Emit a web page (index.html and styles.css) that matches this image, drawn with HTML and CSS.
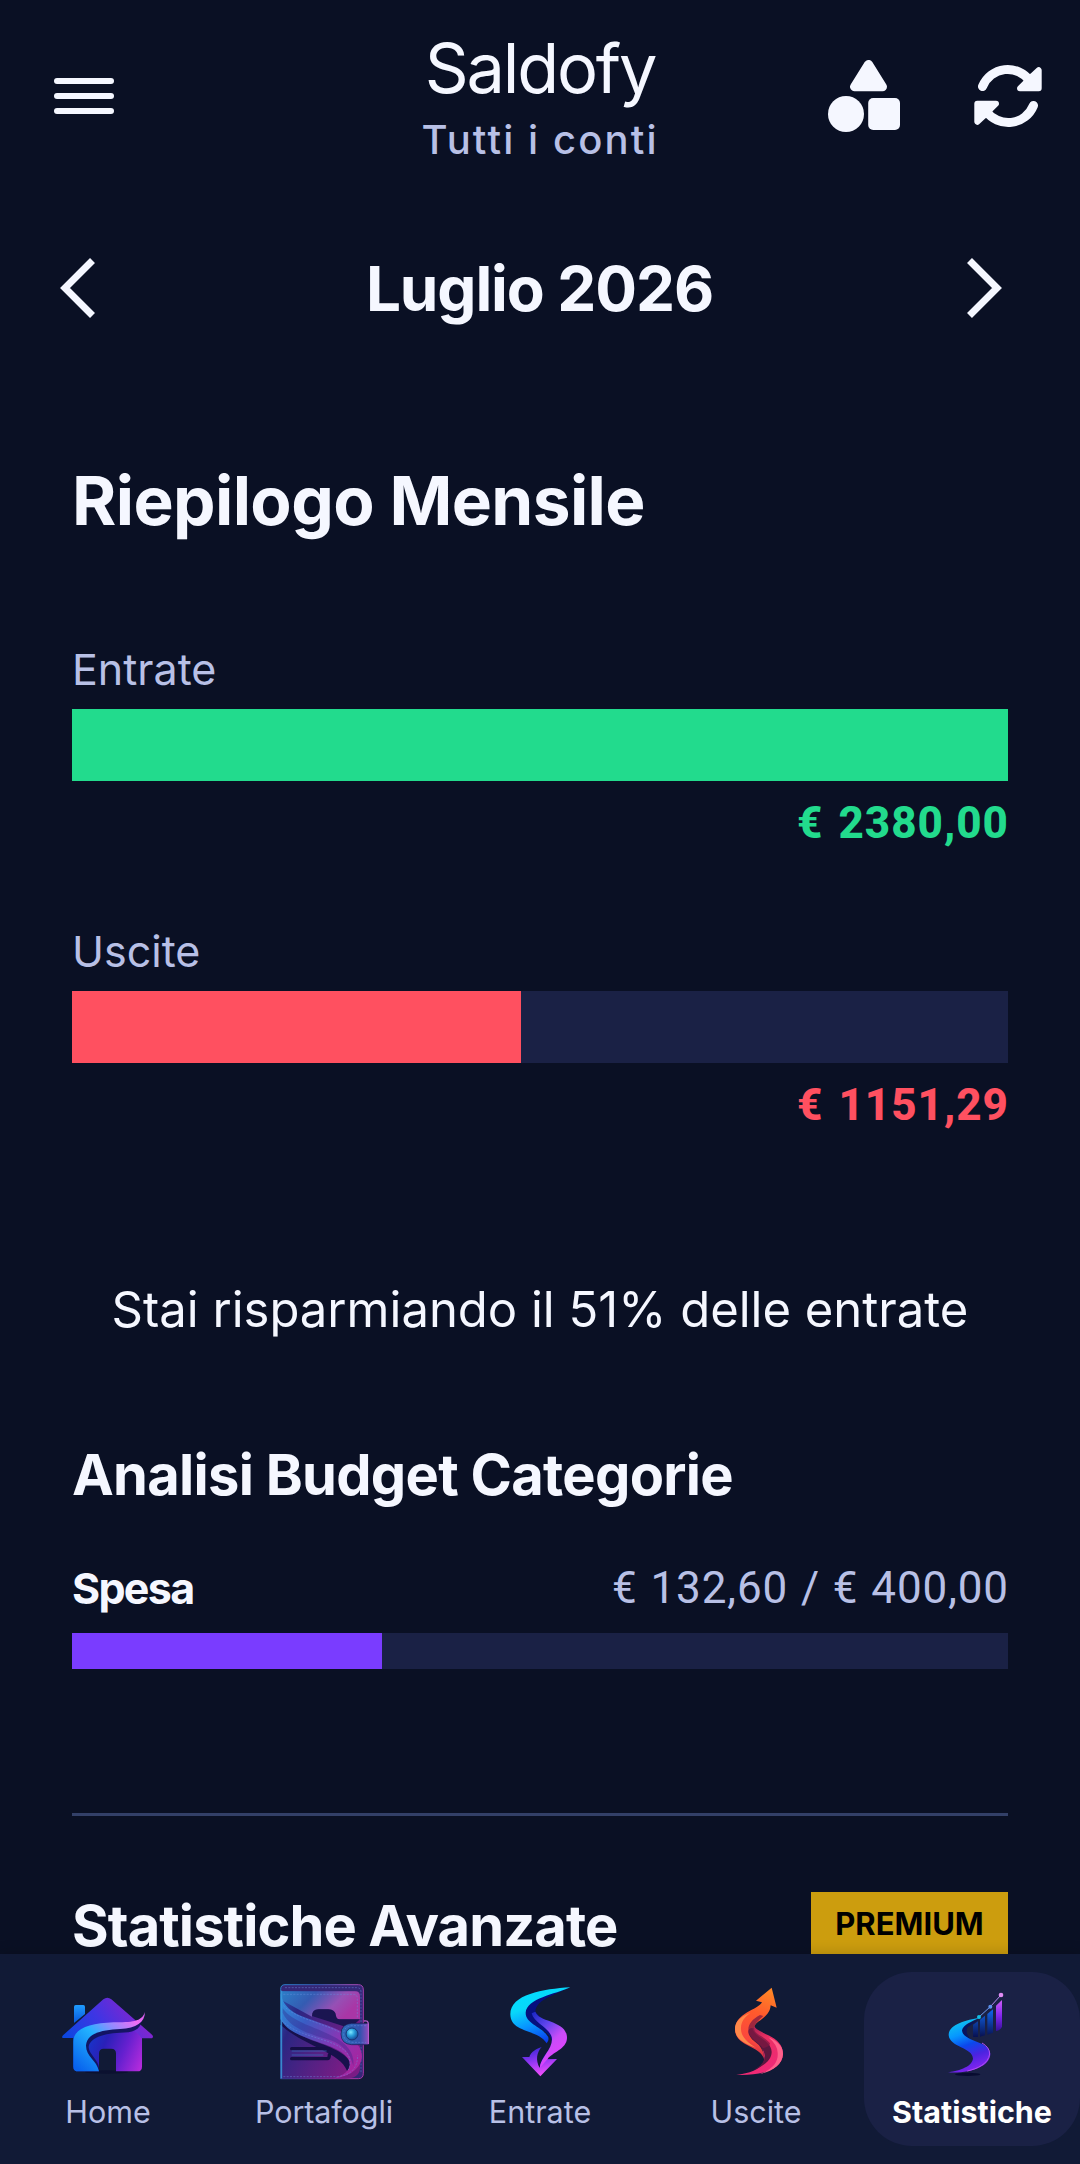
FILE: index.html
```
<!DOCTYPE html>
<html lang="it">
<head>
    <meta charset="UTF-8">
    <meta name="viewport" content="width=device-width, initial-scale=1.0">
    <title>Saldofy</title>
    <link rel="stylesheet" href="styles.css">
</head>
<body>

<header class="topbar">
    <button class="icon-btn menu-btn" aria-label="Menu">
        <svg width="60" height="36" viewBox="0 0 60 36">
            <rect width="60" height="6" rx="3"/>
            <rect y="15" width="60" height="6" rx="3"/>
            <rect y="30" width="60" height="6" rx="3"/>
        </svg>
    </button>
    <div class="brand">
        <div class="brand-name">Saldofy</div>
        <div class="brand-sub">Tutti i conti</div>
    </div>
    <div class="actions">
        <button class="icon-btn" aria-label="Categorie">
            <svg width="72" height="72" viewBox="0 0 72 72">
                <path class="round8" d="M40.5 4.5 L26.5 26.8 H54.5 Z"/>
                <circle cx="18" cy="54" r="18"/>
                <rect x="40.2" y="38" width="31.8" height="32" rx="5"/>
            </svg>
        </button>
        <button class="icon-btn" aria-label="Aggiorna">
            <svg width="68" height="64" viewBox="0 0 68 64">
                <path class="arc" d="M8.5 22.5 A27.2 27.2 0 0 1 56 17"/>
                <path class="round6" d="M64.7 6.2 V24.3 H46 L52 18.5 Q54.5 16 52.5 14 L58 12.5 Z"/>
                <path class="arc" d="M59.5 41.5 A27.2 27.2 0 0 1 12 47"/>
                <path class="round6" d="M3.3 57.8 V39.7 H22 L16 45.5 Q13.5 48 15.5 50 L10 51.5 Z"/>
            </svg>
        </button>
    </div>
</header>

<main class="content">
    <div class="month-nav">
        <button class="icon-btn" aria-label="Mese precedente">
            <svg width="36" height="60" viewBox="0 0 36 60"><path class="chevron" d="M32.5 2.5 L5 30 L32.5 57.5"/></svg>
        </button>
        <div class="month">Luglio 2026</div>
        <button class="icon-btn" aria-label="Mese successivo">
            <svg width="36" height="60" viewBox="0 0 36 60"><path class="chevron" d="M3.5 2.5 L31 30 L3.5 57.5"/></svg>
        </button>
    </div>

    <section class="summary">
        <h1>Riepilogo Mensile</h1>
        <div class="flow">
            <div class="label">Entrate</div>
            <div class="bar"><div class="fill income" style="width: 100%"></div></div>
            <div class="amount income-text">€ 2380,00</div>
        </div>
        <div class="flow">
            <div class="label">Uscite</div>
            <div class="bar"><div class="fill expense" style="width: 48%"></div></div>
            <div class="amount expense-text">€ 1151,29</div>
        </div>
        <p class="saving">Stai risparmiando il 51% delle entrate</p>
    </section>

    <section class="budget">
        <h2>Analisi Budget Categorie</h2>
        <div class="budget-row">
            <span class="budget-name">Spesa</span>
            <span class="budget-value">€ 132,60 / € 400,00</span>
        </div>
        <div class="bar thin"><div class="fill category" style="width: 33.15%"></div></div>
    </section>

    <section class="advanced">
        <h2>Statistiche Avanzate</h2>
        <span class="badge">PREMIUM</span>
    </section>
</main>

<nav class="tabbar">
    <a class="tab">
        <svg class="tab-icon" viewBox="60 72 288 288">
            <defs>
                <linearGradient id="homeBody" x1="0" y1=".5" x2="1" y2=".9">
                    <stop offset="0" stop-color="#0647d8"/><stop offset=".42" stop-color="#2a20b8"/><stop offset=".7" stop-color="#6520cf"/><stop offset="1" stop-color="#b42bdc"/>
                </linearGradient>
                <linearGradient id="homeRoof" x1="0" y1="1" x2="1" y2=".7">
                    <stop offset="0" stop-color="#0748df"/><stop offset=".5" stop-color="#3f35e4"/><stop offset="1" stop-color="#8a23cc"/>
                </linearGradient>
                <linearGradient id="homeWave" x1="0" y1=".9" x2="1" y2="0">
                    <stop offset="0" stop-color="#0862ed"/><stop offset=".42" stop-color="#22b2ff"/><stop offset=".62" stop-color="#8f8cff"/><stop offset=".85" stop-color="#f06cf5"/><stop offset="1" stop-color="#cf58ec"/>
                </linearGradient>
                <linearGradient id="chimney" x1="0" y1="0" x2="0" y2="1">
                    <stop offset="0" stop-color="#1f9cff"/><stop offset="1" stop-color="#0756dd"/>
                </linearGradient>
            </defs>
            <ellipse cx="200" cy="336" rx="65" ry="5" fill="#0b1130"/>
            <path fill="url(#chimney)" d="M102 140 q0 -5 5 -5 h23 q5 0 5 5 v22 l-33 27z"/>
            <path fill="url(#homeBody)" d="M100 220 L200 140 L306 220 V320 Q306 334 292 334 H228 V280 Q228 266 214 266 H191 Q177 266 177 280 V334 H115 Q100 334 100 320z"/>
            <path fill="url(#homeRoof)" d="M68 234 Q64 230 70 225 L190 118 Q202 109 214 118 L336 224 Q342 230 336 235 H304 C290 205 240 196 195 208 Q130 214 100 234z"/>
            <path fill="#11135a" opacity=".9" d="M177 334 C150 305 130 285 132 252 C140 217 190 207 240 205 C270 203 295 193 306 180 C300 212 278 218 240 218 C180 221 147 238 146 262 C147 282 174 300 177 322z"/>
            <path fill="url(#homeWave)" d="M177 334 C170 300 137 290 138 256 C142 217 190 210 240 207 C290 204 314 188 315 156 C305 186 275 187 220 187 C150 190 100 205 100 245 V320 Q100 334 115 334z"/>
        </svg>
        <span>Home</span>
    </a>
    <a class="tab">
        <svg class="tab-icon" viewBox="708 72 288 288">
            <defs>
                <linearGradient id="leather" x1="0" y1="0" x2="1" y2=".35">
                    <stop offset="0" stop-color="#2b7fc8"/><stop offset=".4" stop-color="#355bb2"/><stop offset=".75" stop-color="#9650b5"/><stop offset="1" stop-color="#a936a6"/>
                </linearGradient>
                <linearGradient id="leatherLow" x1="0" y1="0" x2="1" y2=".5">
                    <stop offset="0" stop-color="#2c53b0"/><stop offset=".25" stop-color="#2b2682"/><stop offset="1" stop-color="#7a1c85"/>
                </linearGradient>
                <linearGradient id="strap" x1="0" y1="0" x2="1" y2=".8">
                    <stop offset="0" stop-color="#2e95dd"/><stop offset=".35" stop-color="#3a5cc4"/><stop offset=".7" stop-color="#8a35b4"/><stop offset="1" stop-color="#a8249e"/>
                </linearGradient>
                <linearGradient id="clasp" x1="0" y1="0" x2="1" y2="0">
                    <stop offset="0" stop-color="#2b6cb8"/><stop offset=".7" stop-color="#3352ae"/><stop offset="1" stop-color="#8d4cc0"/>
                </linearGradient>
                <radialGradient id="snap" cx=".4" cy=".35" r=".65">
                    <stop offset="0" stop-color="#7ee6ff"/><stop offset=".45" stop-color="#2aa0dc"/><stop offset="1" stop-color="#174a97"/>
                </radialGradient>
            </defs>
            <path fill="#352777" stroke="url(#leather)" stroke-width="3" d="M735 74 H955 Q970 74 970 90 V340 Q970 356 955 356 H722 V88 Q722 74 735 74z"/>
            <path class="stitch" d="M735 83 H950 Q963 83 963 96 V340"/>
            <path fill="url(#leatherLow)" d="M724 94 H945 Q960 94 960 110 V325 Q958 356 915 356 H724z"/>
            <path fill="url(#leather)" d="M724 94 H945 Q960 94 960 110 V178 H898 Q890 178 888 168 Q886 148 865 148 H835 Q816 148 816 170 L724 120z"/>
            <path fill="#1a1551" d="M816 168 Q816 148 836 148 H865 Q886 148 888 168 Q890 178 898 178 H960 L930 205z"/>
            <path class="stitch" d="M730 103 H940 Q952 103 952 116 V176"/>
            <path fill="#17104c" d="M722 178 C775 250 880 244 928 300 Q938 325 925 344 C910 275 800 265 722 195z"/>
            <path fill="url(#strap)" d="M722 100 C735 165 790 168 880 203 C960 235 990 290 945 330 Q925 350 880 356 C935 340 945 305 905 277 C850 240 750 235 722 178z"/>
            <path fill="#302288" opacity=".35" d="M728 145 C760 190 830 200 890 235 Q945 268 940 318 Q925 258 870 240 C800 220 748 202 728 158z"/>
            <path class="stitch" d="M730 137 C770 178 850 188 905 220 M726 182 C780 236 870 230 918 275 Q938 300 925 330"/>
            <path class="slot" d="M755 266 H866 M755 296 H862 Q868 296 868 284"/>
            <path stroke="#3b72c4" stroke-width="2" fill="none" d="M755 285 H850 M755 273 H860"/>
            <path class="stitch" d="M730 350 H890 Q953 345 953 285"/>
            <path fill="none" stroke="#3a9bdc" stroke-width="3" d="M725 92 V355"/>
            <path fill="url(#clasp)" stroke="#17164f" stroke-width="2" d="M935 190 H985 V254 H935 Q903 252 903 222 Q903 192 935 190z"/>
            <path fill="none" stroke="#b45ccc" stroke-width="4" d="M972 183 Q985 180 985 193 V252"/>
            <path class="stitch" d="M978 197 H936 Q911 199 911 222 Q911 245 936 247 H978"/>
            <circle cx="936" cy="222" r="18" fill="url(#snap)" stroke="#173476" stroke-width="3"/>
        </svg>
        <span class="tight">Portafogli</span>
    </a>
    <a class="tab">
        <svg class="tab-icon" viewBox="96 72 288 288">
            <defs>
                <linearGradient id="inTop" x1=".3" y1="0" x2=".7" y2="1">
                    <stop offset="0" stop-color="#00ddff"/><stop offset=".3" stop-color="#08d8fa"/><stop offset=".6" stop-color="#0794ff"/><stop offset="1" stop-color="#0a2ce8"/>
                </linearGradient>
                <linearGradient id="inLow" x1="0" y1="0" x2=".6" y2="1">
                    <stop offset="0" stop-color="#1626c4"/><stop offset=".35" stop-color="#6045ed"/><stop offset=".65" stop-color="#c94cf8"/><stop offset="1" stop-color="#e83fff"/>
                </linearGradient>
                <linearGradient id="inArrow" x1=".3" y1="0" x2=".6" y2="1">
                    <stop offset="0" stop-color="#3725d5"/><stop offset=".5" stop-color="#9838f5"/><stop offset="1" stop-color="#fa50fa"/>
                </linearGradient>
            </defs>
            <path fill="#06107f" d="M331 82 C275 98 200 115 196 160 C198 200 270 205 275 243 C276 270 240 288 239 324 L262 290 L300 235 L226 155 C228 120 280 106 331 82z"/>
            <path fill="url(#inArrow)" d="M186 291 H208 C212 276 230 266 245 261 C230 277 226 300 239 324 Q242 310 249 298 L291 297 L241 349z"/>
            <path fill="url(#inLow)" d="M226 155 C236 188 321 180 321 234 C320 268 275 278 263 297 L239 324 C242 292 276 270 276 238 C276 207 222 190 215 160z"/>
            <path fill="url(#inTop)" d="M331 82 C250 87 151 103 151 163 C152 220 234 207 260 250 Q272 236 258 222 C240 198 197 190 197 158 C201 115 285 103 331 82z"/>
        </svg>
        <span>Entrate</span>
    </a>
    <a class="tab">
        <svg class="tab-icon" viewBox="744 72 288 288">
            <defs>
                <linearGradient id="outTop" x1=".6" y1="0" x2=".4" y2="1">
                    <stop offset="0" stop-color="#ff8526"/><stop offset=".35" stop-color="#ff5a2c"/><stop offset=".75" stop-color="#fa463e"/><stop offset="1" stop-color="#b52250"/>
                </linearGradient>
                <linearGradient id="outLow" x1="0" y1="0" x2=".4" y2="1">
                    <stop offset="0" stop-color="#7d1849"/><stop offset=".45" stop-color="#e92f62"/><stop offset="1" stop-color="#f12977"/>
                </linearGradient>
            </defs>
            <path fill="url(#outLow)" d="M880 190 C882 225 969 220 969 282 C967 330 900 348 829 345 C870 339 905 330 914 298 L905 255 L862 210z"/>
            <path fill="#ff608b" d="M925 232 Q969 250 969 282 C967 315 937 334 900 342 C945 325 955 300 953 278 Q952 254 925 232z"/>
            <path fill="#5b173f" d="M880 185 C860 230 932 232 935 275 C936 307 895 327 860 337 C895 327 916 308 914 285 C910 252 862 240 862 207z"/>
            <path fill="url(#outTop)" d="M935 83 L950 143 L932 136 C929 178 882 180 882 205 C860 200 858 225 885 245 Q913 265 913 300 C903 255 825 262 825 207 C829 156 892 152 906 127 L888 122z"/>
            <path fill="#ff8849" d="M872 158 C836 172 825 187 825 207 C826 242 863 253 889 264 C858 244 843 228 843 207 C842 185 855 169 872 158z"/>
            <path fill="#7d1943" opacity=".75" d="M900 165 C862 185 852 216 885 243 Q900 252 909 265 Q930 260 930 250 C910 225 882 225 882 203 Q884 190 910 168z"/>
        </svg>
        <span>Uscite</span>
    </a>
    <a class="tab active">
        <svg class="tab-icon" viewBox="432 342 288 288">
            <defs>
                <linearGradient id="statS" x1=".3" y1="0" x2=".6" y2="1">
                    <stop offset="0" stop-color="#10c8ee"/><stop offset=".28" stop-color="#0697ff"/><stop offset=".5" stop-color="#0b48ec"/><stop offset=".72" stop-color="#4b23e0"/><stop offset="1" stop-color="#8a25f2"/>
                </linearGradient>
                <linearGradient id="statBlue" x1="0" y1="0" x2="0" y2="1">
                    <stop offset="0" stop-color="#1268ee"/><stop offset="1" stop-color="#081050"/>
                </linearGradient>
                <linearGradient id="statViolet" x1="0" y1="0" x2="0" y2="1">
                    <stop offset="0" stop-color="#cf5df7"/><stop offset=".5" stop-color="#8427ee"/><stop offset="1" stop-color="#35109a"/>
                </linearGradient>
            </defs>
            <ellipse cx="563" cy="613" rx="38" ry="5" fill="#080c30"/>
            <path fill="url(#statBlue)" d="M579 464 L594 454 V501 H579z M600 449 L615 437 V496 L600 500z M622 432 L639 418 V488 L622 494z"/>
            <path fill="url(#statViolet)" d="M648 407 L666 390 V470 Q662 480 648 483z"/>
            <path fill="#07135f" d="M598 447 C565 462 535 470 545 490 L575 513 Q553 488 563 472z"/>
            <path fill="url(#statS)" d="M598 443 C560 450 506 462 506 495 C508 532 579 532 579 566 C575 593 530 603 502 607 C570 612 630 590 631 552 C630 512 548 516 546 481 C550 463 575 455 598 443z"/>
            <path fill="none" stroke="#b44ff0" stroke-width="3" d="M606 519 Q629 532 629 552 C625 582 592 596 562 603"/>
            <path fill="none" stroke="#6f9bf5" stroke-width="3" d="M597 441 L631 410"/>
            <path fill="none" stroke="#b58cf0" stroke-width="3" d="M631 410 L663 375"/>
            <circle cx="597" cy="441" r="6" fill="#12bfe4"/>
            <circle cx="631" cy="410" r="6" fill="#5c91ee"/>
            <circle cx="663" cy="375" r="7" fill="#e08cf3"/>
        </svg>
        <span>Statistiche</span>
    </a>
</nav>

</body>
</html>
```
FILE: styles.css
```
* {
    box-sizing: border-box;
}
body {
    margin: 0;
    height: 2164px;
    display: flex;
    flex-direction: column;
    overflow: hidden;
    background-color: #0a1024;
    color: #f5f7ff;
    font-family: Inter, Roboto, sans-serif;
}
h1, h2, p {
    margin: 0;
}
.icon-btn {
    display: block;
    padding: 0;
    border: none;
    background: none;
    cursor: pointer;
}
.icon-btn svg {
    display: block;
    fill: #f5f7ff;
    stroke: #f5f7ff;
    stroke-width: 0;
}
.icon-btn .round8 {
    stroke-width: 9;
    stroke-linejoin: round;
}
.icon-btn .round6 {
    stroke-width: 6;
    stroke-linejoin: round;
}
.icon-btn .arc {
    fill: none;
    stroke-width: 9;
    stroke-linecap: round;
}
.icon-btn .chevron {
    fill: none;
    stroke-width: 7;
}

/* header */
.topbar {
    display: grid;
    grid-template-columns: 1fr auto 1fr;
    align-items: center;
    height: 192px;
    flex-shrink: 0;
    padding: 0 38px 0 54px;
}
.brand {
    padding: 3px 0 0;
    text-align: center;
    margin-left: -16px;
}
.brand-name {
    font-size: 68.5px;
    line-height: 76px;
    letter-spacing: -2.2px;
}
.brand-sub {
    margin-top: 9px;
    font-size: 40px;
    line-height: 48px;
    font-weight: 500;
    letter-spacing: 2.1px;
    color: #b8c0e6;
}
.actions {
    display: flex;
    justify-content: flex-end;
    align-items: center;
    gap: 74px;
}

/* scrolling area */
.content {
    flex: 1;
    min-height: 0;
    overflow: hidden;
    padding: 59px 72px 0;
}
.month-nav {
    display: flex;
    justify-content: space-between;
    align-items: center;
    height: 74px;
    margin: 0 6px 0 -12px;
}
.month {
    padding: 1px 0 0 17px;
    font-size: 62px;
    line-height: 74px;
    font-weight: 700;
    letter-spacing: -1.1px;
}
.summary {
    padding-top: 136px;
}
h1 {
    font-size: 67.5px;
    line-height: 80px;
    letter-spacing: -0.6px;
    margin-bottom: 103px;
}
h2 {
    font-size: 56px;
    line-height: 68px;
    letter-spacing: -0.7px;
}
.flow {
    margin-bottom: 78px;
}
.label {
    font-size: 43px;
    line-height: 50px;
    padding-bottom: 2px;
    color: #b8c0e6;
}
.bar {
    height: 72px;
    margin-top: 13px;
    background-color: #1a2145;
}
.bar.thin {
    height: 36px;
    margin-top: 19px;
}
.fill {
    height: 100%;
}
.income {
    background-color: #22db8d;
}
.expense {
    background-color: #ff5060;
}
.category {
    background-color: #7a3cff;
}
.amount {
    margin: 15px -1px -2px 0;
    text-align: right;
    font-family: Roboto, sans-serif;
    font-size: 44px;
    line-height: 54px;
    font-weight: 800;
    letter-spacing: 1px;
    word-spacing: 3px;
}
.income-text {
    color: #22db8d;
}
.expense-text {
    color: #ff5060;
}
.saving {
    padding-top: 72px;
    text-align: center;
    font-size: 49px;
    line-height: 60px;
}
.budget {
    padding: 101px 0 144px;
    border-bottom: 3px solid #334068;
}
.budget-row {
    display: flex;
    justify-content: space-between;
    margin: 53px -1px 0 0;
    font-size: 43px;
    line-height: 52px;
}
.budget-name {
    font-weight: 700;
    letter-spacing: -1.7px;
}
.budget-value {
    font-family: Roboto, sans-serif;
    font-size: 44px;
    letter-spacing: 0.9px;
    word-spacing: 1px;
    color: #b8c0e6;
}
.advanced {
    display: flex;
    justify-content: space-between;
    align-items: flex-start;
    padding-top: 76px;
}
.advanced h2 {
    margin-top: 8px;
    line-height: 52px;
    letter-spacing: -0.9px;
}
.badge {
    width: 197px;
    padding: 14px 0;
    text-align: center;
    background-color: #cc9d0e;
    color: #000;
    font-size: 31px;
    line-height: 36px;
    font-weight: 700;
}

/* bottom navigation */
.tabbar {
    position: relative;
    display: grid;
    grid-template-columns: repeat(5, 1fr);
    height: 210px;
    flex-shrink: 0;
    padding: 18px 0;
    background-color: #111a36;
    box-shadow: 0 -2px 12px rgba(0, 0, 0, 0.15);
}
.tab {
    display: flex;
    flex-direction: column;
    align-items: center;
    gap: 14px;
    padding-top: 12px;
    border-radius: 48px;
    font-size: 30.5px;
    line-height: 36px;
    color: #b8c0e6;
}
.tab .tight {
    letter-spacing: -0.1px;
}
.tab.active {
    background-color: #1a2145;
    color: #fff;
    font-weight: 700;
}
.tab-icon {
    width: 96px;
    height: 96px;
}
.stitch {
    fill: none;
    stroke: #6a8fe0;
    stroke-width: 2;
    stroke-dasharray: 6 4;
    opacity: 0.7;
}
.slot {
    fill: none;
    stroke: #150f45;
    stroke-width: 10;
    stroke-linecap: round;
}
```
